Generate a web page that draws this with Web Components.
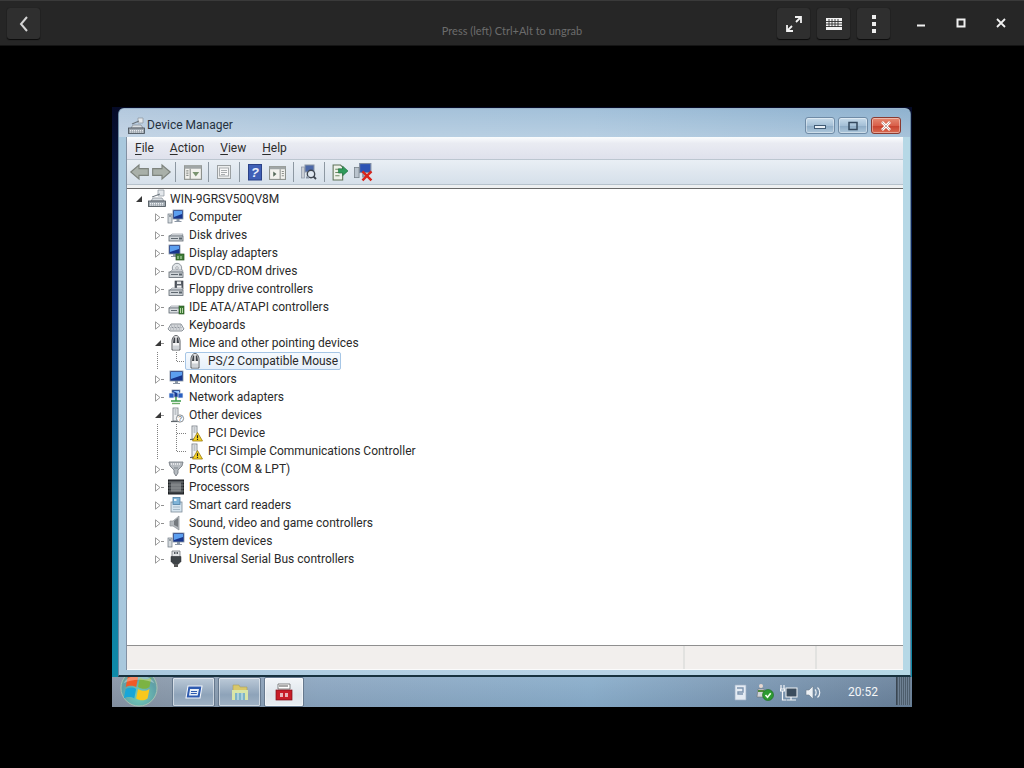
<!DOCTYPE html>
<html lang="en"><head><meta charset="utf-8"><title>Device Manager</title>
<style>html,body{margin:0;background:#000;height:100%;overflow:hidden}body{font-family:Roboto,"Open Sans",sans-serif}</style>
</head><body>
<vm-app></vm-app>
<script>
const mon=(x=4,y=1,w=11,h=9)=>`<path d="M${x+w/2-1.5} ${y+h}h3v2h2v1h-7v-1h2z" fill="#8d98a6"/><rect x="${x}" y="${y}" width="${w}" height="${h}" fill="#17358c" stroke="#8593a3" stroke-width=".8"/><path d="M${x+1} ${y+1}h${w-2}v${h/3}L${x+1} ${y+h-2}z" fill="#5c9ff0"/>`;
const tower=(x=0,y=6,w=4,h=8)=>`<rect x="${x}" y="${y}" width="${w}" height="${h}" fill="#d5dade" stroke="#6c7680" stroke-width=".7"/><path d="M${x+1} ${y+2}h${w-2}" stroke="#58626c"/>`;
const drive=(y=9,h=5)=>`<path d="M2 ${y}l2-2h11l-1 2z" fill="#e8ebee" stroke="#7f8890" stroke-width=".6"/><rect x="1" y="${y}" width="14" height="${h}" fill="#cfd4d8" stroke="#5f6870" stroke-width=".8"/><path d="M3 ${y+2.5}h7" stroke="#5f6870"/><rect x="11" y="${y+1.5}" width="3" height="2" fill="#59636b"/>`;
const mouse=`<path d="M4 15V6c0-3 1.800-5.500 4-5.500s4 2.500 4 5.500v9z" fill="#f5f5f5" stroke="#45494e" stroke-width=".9"/><path d="M5.700 2.500h1.600v5.500H5zM8.700 2.500h1.600l.7 5.500H8.700z" fill="#3c4046"/><path d="M5 10.500h6v4H5z" fill="#cfd3d7"/>`;
const pci=`<rect x="5" y="1" width="5" height="13" fill="#eef0f2" stroke="#747b83" stroke-width=".8"/><path d="M6.5 3h2M6.5 5h2M6.5 7h2" stroke="#8f969e"/><path d="M3 14.5h9" stroke="#60666c" stroke-width="1.2"/>`;
const warn=`<path d="M10.5 7.5l5 8.5H5.5z" fill="#f6d323" stroke="#9a7a10" stroke-width=".8"/><path d="M10.5 10.3v3M10.5 14v1" stroke="#222" stroke-width="1.2"/>`;
const I={
 host:`<path d="M10 0h5v5h-5z" fill="#e4e8ec" stroke="#8b939b" stroke-width=".7"/><path d="M3 10l2-3h8l2 3z" fill="#d9dee2" stroke="#7f8890" stroke-width=".7"/><path d="M4 6l7-3" stroke="#6a737b" stroke-width="1.2"/><rect x=".5" y="10" width="16" height="5.5" fill="#9ea7af" stroke="#444c54" stroke-width=".8"/><path d="M2 12.5h13M2 14h13" stroke="#f0f2f4" stroke-dasharray="1.2 .8" stroke-width=".9"/>`,
 computer:mon(5,1,10,9)+tower(0,5,4,9),
 disk:`<path d="M1 9c2-2 12-2 14 0" fill="#e9ecef" stroke="#8f979e" stroke-width=".7"/>`+drive(9,5),
 display:mon(1,0,11,9)+`<rect x="8" y="9" width="8" height="6" fill="#3e7d38" stroke="#25521f" stroke-width=".7"/><path d="M10 11v3M13 11v3" stroke="#cde8be"/>`,
 dvd:`<circle cx="9" cy="5" r="4.7" fill="#e3e7ea" stroke="#7a828a" stroke-width=".8"/><circle cx="9" cy="5" r="1.3" fill="#fff" stroke="#7a828a" stroke-width=".6"/>`+drive(9,5.5),
 floppy:`<rect x="7" y="0" width="8" height="8" fill="#5a6068" stroke="#33383e" stroke-width=".6"/><rect x="9" y="0.5" width="4" height="2.5" fill="#e8eaec"/><rect x="9" y="4.5" width="4.5" height="3.5" fill="#f4f4f4"/>`+drive(9,5.5),
 ide:`<path d="M1 9l2-2h9l-1 2z" fill="#e8ebee" stroke="#7f8890" stroke-width=".6"/><rect x="1" y="9" width="11" height="5" fill="#d8dcdf" stroke="#5f6870" stroke-width=".8"/><path d="M3 11.5h6" stroke="#5f6870"/><rect x="11" y="7" width="5" height="8" fill="#3b7b33" stroke="#25521f" stroke-width=".6"/><path d="M12.5 9v5M14.5 9v5" stroke="#d5ecc4" stroke-width=".8"/>`,
 keyboard:`<path d="M3 7h10l3 5-2 2H2l-2-2z" fill="#e6e8ea" stroke="#6f777f" stroke-width=".8"/><path d="M3 9h10M2.5 10.5h11M2 12h12" stroke="#8e959c" stroke-dasharray="1 .5"/>`,
 mouse,
 monitor:mon(2,0,13,10),
 network:`<rect x="4" y="1" width="8" height="7" fill="#153a90" stroke="#7d8b9b" stroke-width=".7"/><path d="M5 2h6v3z" fill="#8fc2ff"/><rect x="1" y="4" width="5" height="5" fill="#2a60c0" stroke="#f2f4f6" stroke-width=".7"/><rect x="10" y="4" width="5" height="5" fill="#2a60c0" stroke="#f2f4f6" stroke-width=".7"/><path d="M8 8v4M3 12h10" stroke="#3a9a48" stroke-width="1.4"/><path d="M4 14.5h8" stroke="#6fae6a" stroke-width="1.4"/>`,
 other:pci+`<circle cx="12" cy="11.5" r="3.6" fill="#fff" stroke="#6a7178" stroke-width=".8"/><text x="12" y="14" font-size="6.5" text-anchor="middle" font-family="Liberation Sans" fill="#3b4148">?</text>`,
 warndev:pci+warn,
 ports:`<path d="M1 1h14l-1 4-4 4v3l-2 3-2-3V9L2 5z" fill="#b6bbc0" stroke="#6d747b" stroke-width=".8"/><path d="M3 3h10" stroke="#f3f4f5" stroke-width="1.4" stroke-dasharray="1 1"/><path d="M6 7h4" stroke="#7d848a"/>`,
 cpu:`<rect x="0.5" y="1" width="15" height="14" fill="#3d4145" stroke="#1c1f22"/><rect x="3" y="3.5" width="10" height="9" fill="#75797c"/><path d="M0 3h16M0 6h16M0 9h16M0 12h16" stroke="#a5a8aa" stroke-width=".5"/>`,
 smart:`<rect x="3" y="5" width="11" height="10" fill="#d6e4ee" stroke="#7d8c98" stroke-width=".8"/><rect x="5" y="0.5" width="7" height="7" fill="#7fb4d8" stroke="#4e7ea4" stroke-width=".8"/><rect x="6" y="2" width="2.5" height="2" fill="#e9f2f8"/><path d="M5 10h7M5 12.5h7" stroke="#a5b9c8"/>`,
 sound:`<path d="M2 6h3l6-5v14l-6-4H2z" fill="#b2b7bc" stroke="#8a9096" stroke-width=".7"/><path d="M6 6l4-3v9l-4-2z" fill="#74797e"/>`,
 system:mon(5,0,11,9)+tower(0,5,4,9),
 usb:`<path d="M4 0h8v6H4z" fill="#e2e4e6" stroke="#62686e" stroke-width=".7"/><path d="M6 1h1.5v2H6zM8.5 1H10v2H8.5z" fill="#555b61"/><path d="M3 5.5h10v5l-3 3H6l-3-3z" fill="#3e4347" stroke="#2a2d30" stroke-width=".5"/><path d="M6 13.5h4V16H6z" fill="#555"/>`,
 tbHost:`<path d="M9 -1h6v6H9z" fill="#e4e8ec" stroke="#8b939b" stroke-width=".7"/><path d="M2 10l2-3h9l2 3z" fill="#d9dee2" stroke="#7f8890" stroke-width=".7"/><path d="M3 6l8-3" stroke="#6a737b"/><rect x="-.5" y="10" width="17" height="5.500" fill="#9ea7af" stroke="#444c54" stroke-width=".8"/><path d="M1 12.500h14M1 14h14" stroke="#f0f2f4" stroke-dasharray="1.200 .8"/>`,
 tBack:`<path d="M.7 8L8 1.8V5h8.3v6H8v3.2z" fill="#a9b0a9" stroke="#7d837d"/>`,
 tFwd:`<path d="M15.3 8L8 1.8V5H-.3v6H8v3.2z" fill="#a9b0a9" stroke="#7d837d"/>`,
 tTree:`<rect x=".5" y="2.5" width="15" height="12" fill="#f2f2ee" stroke="#8d918d"/><path d="M.5 2.5h15v2.5H.5z" fill="#a0a6a6"/><path d="M5.5 5v9.5" stroke="#8d918d"/><path d="M7.5 8l3 4 3-4z" fill="#7a9470"/><path d="M2 7h2M2 9h2M2 11h2" stroke="#8d918d"/>`,
 tProps:`<rect x="1.5" y="1.5" width="13" height="13" fill="#eceeee" stroke="#9ba0a2"/><rect x="3.5" y="4" width="9" height="8" fill="#f8f8f8" stroke="#a9adaf"/><path d="M5 6.5h6M5 8.5h6M5 10.5h4" stroke="#a9adaf"/>`,
 tHelp:`<rect x="1.5" y="0.5" width="13" height="15.5" fill="#3f5fb6" stroke="#2b4288"/><text x="8" y="13" font-size="13" font-weight="700" text-anchor="middle" font-family="Liberation Sans" fill="#e8eefc">?</text>`,
 tPane:`<rect x=".5" y="2.5" width="15" height="12" fill="#f2f2ee" stroke="#8d918d"/><path d="M.5 2.5h15v2.5H.5z" fill="#a0a6a6"/><path d="M10.5 5v9.5" stroke="#8d918d"/><path d="M4 7l3 2.5L4 12z" fill="#55695a"/><path d="M12 7h2M12 9h2M12 11h2" stroke="#8d918d"/>`,
 tScan:`<rect x="4" y="1" width="9" height="7" fill="#4b68a8" stroke="#8a95a6"/><rect x="0.5" y="3" width="3" height="11" fill="#c9ced4" stroke="#8a95a6" stroke-width=".7"/><circle cx="10" cy="10" r="3.700" fill="#dfe8f2" stroke="#3e4650" stroke-width="1.400"/><path d="M5 13.500h3" stroke="#8a95a6" stroke-width="2"/><path d="M12.500 12.500l2.500 2.500" stroke="#3e4650" stroke-width="1.800"/>`,
 tUpdate:`<path d="M2 1h7l2 2v12H2z" fill="#eef1e9" stroke="#5f7358"/><path d="M4 5h4M4 8h3M4 11h4" stroke="#6d8a63"/><path d="M16 6.5L11 2v2.5H7v4h4V11z" fill="#2f9a5a" stroke="#1f6c3e" stroke-width=".6"/>`,
 tRemove:`<rect x="5" y="0.5" width="10" height="8" fill="#2c52b4" stroke="#7f8da3"/><rect x="0.5" y="4" width="4" height="9" fill="#b9c3cd" stroke="#76808a" stroke-width=".7"/><path d="M8 9v3h4" stroke="#8a95a6" stroke-width="1.6" fill="none"/><path d="M7.5 7.5l8 8M15.5 7.5l-8 8" stroke="#d8251c" stroke-width="2.2"/>`
};
const svg=(n,s=16,vb=16)=>`<svg width="${s}" height="${s}" viewBox="0 0 ${vb} ${vb}" style="display:block;overflow:visible" aria-hidden="true">${I[n]}</svg>`;

function el(name,css,html){
  customElements.define(name,class extends HTMLElement{
    connectedCallback(){
      if(this.shadowRoot)return;
      const r=this.attachShadow({mode:'open'});
      r.innerHTML=`<style>${css}</style>`+(typeof html==='function'?html(this):html);
    }
  });
}

el('vm-header',`
:host{display:flex;align-items:flex-start;height:46px;box-sizing:border-box;background:#262626;border-top:1px solid #3a3a3a;border-bottom:1px solid #141414;padding:7px 0 0 7px;color:#fff}
.b{width:33px;height:31px;background:#2f2f2f;border-radius:3px;box-shadow:0 1px 1px #0c0c0c,0 0 1px #161616;display:flex;align-items:center;justify-content:center;flex:none}
.msg{flex:1;text-align:center;font:11px/1 Lato,"Open Sans",sans-serif;color:#6c6c6c;padding:17px 0 0 207px;white-space:nowrap}
.r{display:flex;gap:7px;margin-right:11px}
.wc{display:flex;width:120px;flex:none;margin-right:3px}
.wc span{width:40px;height:30px;display:flex;align-items:center;justify-content:center}
`,`
<span class="b"><svg width="12" height="16" viewBox="0 0 12 16"><path d="M9 1L3 8l6 7" fill="none" stroke="#d4d4d4" stroke-width="2"/></svg></span>
<span class="msg">Press (left) Ctrl+Alt to ungrab</span>
<span class="r">
<span class="b"><svg width="16" height="16" viewBox="0 0 16 16"><path d="M9 1h6v6M15 1l-5 5M7 15H1V9M1 15l5-5" fill="none" stroke="#f2f2f2" stroke-width="1.8"/></svg></span>
<span class="b"><svg width="16" height="12" viewBox="0 0 16 12"><rect width="16" height="12" fill="#f2f2f2"/><path d="M0 3.5h16M0 6h16M0 8.500h16M3 1v8M6 1v8M9 1v8M12 1v8" stroke="#2f2f2f" stroke-width=".9"/></svg></span>
<span class="b"><svg width="4" height="18" viewBox="0 0 4 18"><path d="M0 0h4v4H0zM0 7h4v4H0zM0 14h4v4H0z" fill="#eee"/></svg></span>
</span>
<span class="wc">
<span><svg width="10" height="10" viewBox="0 0 10 10"><path d="M1 7.500h8" stroke="#f0f0f0" stroke-width="2"/></svg></span>
<span><svg width="10" height="10" viewBox="0 0 10 10"><rect x="1.500" y="1.500" width="7" height="7" fill="none" stroke="#f0f0f0" stroke-width="2"/></svg></span>
<span><svg width="10" height="10" viewBox="0 0 10 10"><path d="M1 1l8 8M9 1l-8 8" stroke="#f0f0f0" stroke-width="1.800"/></svg></span>
</span>`);

el('win-title',`
:host{display:flex;align-items:flex-start;height:28px;box-sizing:border-box;flex:none;padding:8px 9px 0 9px;color:#26323e;font-size:12px;line-height:17px;background:linear-gradient(180deg,rgba(255,255,255,0) 0,rgba(255,255,255,.22) 100%),linear-gradient(90deg,#b4c9de 0,#a8c3da 25%,#a3c1da 60%,#8fb2cf 100%)}
.ic{margin-right:3px;margin-top:1px}
.t{flex:1;letter-spacing:0}
.btns{display:flex;gap:3px}
.c{width:30px;height:17px;box-sizing:border-box;border:1px solid #6f8ba6;border-radius:3px;background:linear-gradient(180deg,#c8dceb 0,#a5c0d7 50%,#8fadc7 55%,#aec8dc 100%);box-shadow:inset 0 0 0 1px rgba(255,255,255,.4);display:flex;align-items:center;justify-content:center}
.x{border-color:#8a3a30;background:linear-gradient(180deg,#e58a72 0,#d9604a 50%,#c8432f 55%,#d96a50 100%)}
`,`<span class="ic">${svg('host',16)}</span><span class="t">Device Manager</span>
<span class="btns"><span class="c"><svg width="14" height="8" viewBox="0 0 14 8"><rect x="1.500" y="3.500" width="11" height="3" fill="#e9f0f6" stroke="#405a74"/></svg></span>
<span class="c"><svg width="12" height="10" viewBox="0 0 12 10"><rect x="2" y="1.500" width="8" height="7" fill="none" stroke="#33485e" stroke-width="1.500"/></svg></span>
<span class="c x"><svg width="12" height="10" viewBox="0 0 12 10"><path d="M2 1l8 8M10 1L2 9" stroke="#fff" stroke-width="2.600"/><path d="M2 1l8 8M10 1L2 9" stroke="#6d2a20" stroke-width=".4"/></svg></span></span>`);

el('win-menu',`
:host{display:flex;align-items:center;height:23px;flex:none;box-sizing:border-box;background:linear-gradient(180deg,#fafcfd 0,#e9ebf2 30%,#dfe1ec 100%);border-bottom:1px solid #bcc6d0;font-size:12px;color:#2b2b2b}
span{padding:0 8px}
u{text-decoration-thickness:1px;text-underline-offset:2px}
`,`<span><u>F</u>ile</span><span><u>A</u>ction</span><span><u>V</u>iew</span><span><u>H</u>elp</span>`);

el('win-toolbar',`
:host{display:flex;align-items:center;height:25px;flex:none;box-sizing:border-box;background:linear-gradient(180deg,#e9eff5 0,#dfe7ef 50%,#d6e0ea 100%);border-bottom:1px solid #b6c2cc}
i{width:23px;height:22px;display:flex;align-items:center;justify-content:center}
b{width:8px;height:20px;display:block;background:linear-gradient(#8d98a2,#8d98a2) 4px 0/1px 100% no-repeat}
`,`<i>${svg('tBack',18,16)}</i><i>${svg('tFwd',18,16)}</i><b style="background-position:2px 0"></b><i>${svg('tTree',18,16)}</i><b></b><i>${svg('tProps',16)}</i><b></b><i>${svg('tHelp',16)}</i><i>${svg('tPane',17,16)}</i><b></b><i>${svg('tScan',16)}</i><b></b><i>${svg('tUpdate',17,16)}</i><i>${svg('tRemove',18,16)}</i>`);

el('tree-row',`
:host{display:flex;height:18px;align-items:center;padding-left:3px;font-size:12px;color:#2a2a2a;white-space:nowrap}
.g{flex:none;width:56px;height:18px;background:linear-gradient(#808080 50%,transparent 50%) 27px 0/1px 2px repeat-y}
.g svg{display:block}
.e{flex:none;width:18px;height:18px;display:flex;align-items:center;justify-content:center;background:linear-gradient(90deg,#909090 50%,transparent 50%) 12px 9px/6px 1px no-repeat}
.e.l1{margin-left:19px}
.e.root{background:none}
.sel{display:flex;align-items:center;height:18px;box-sizing:border-box;border:1px solid #a6c6e6;border-radius:2px;background:linear-gradient(180deg,#f6fafe,#e6f0fb);padding-right:2px;margin-left:-1px}
.ic{flex:none;margin:0 5px 0 1px}
`,h=>{
 const lv=+h.getAttribute('level')||0,st=h.getAttribute('state')||'',ic=h.getAttribute('icon'),txt=h.getAttribute('text');
 const last=h.hasAttribute('last');
 const exp=st==='open'?`<svg width="8" height="8" viewBox="0 0 8 8"><path d="M7 1v6H1z" fill="#383838"/></svg>`:st==='closed'?`<svg width="6" height="9" viewBox="0 0 6 9"><path d="M.5 .8l4.500 3.700L.5 8.200z" fill="#fff" stroke="#9a9a9a"/></svg>`:'';
 const pre=lv===2?`<span class="g"><svg width="56" height="18" viewBox="0 0 56 18"><path d="M46.500 0V${last?9:18}M47 9.500H56" stroke="#808080" stroke-dasharray="1 1" fill="none"/></svg></span>`:'';
 const inner=`<span class="ic">${svg(ic,16)}</span><span>${txt}</span>`;
 const e=lv===2?'':`<span class="e ${lv===0?'root':'l1'}">${exp}</span>`;
 return pre+e+(h.hasAttribute('selected')?`<span class="sel">${inner}</span>`:inner);
});

const rows=[
 ['0','open','tbHost','WIN-9GRSV50QV8M'],
 ['1','closed','computer','Computer'],['1','closed','disk','Disk drives'],['1','closed','display','Display adapters'],['1','closed','dvd','DVD/CD-ROM drives'],['1','closed','floppy','Floppy drive controllers'],['1','closed','ide','IDE ATA/ATAPI controllers'],['1','closed','keyboard','Keyboards'],
 ['1','open','mouse','Mice and other pointing devices'],
 ['2','','mouse','PS/2 Compatible Mouse','selected last'],
 ['1','closed','monitor','Monitors'],['1','closed','network','Network adapters'],
 ['1','open','other','Other devices'],
 ['2','','warndev','PCI Device',''],['2','','warndev','PCI Simple Communications Controller','last'],
 ['1','closed','ports','Ports (COM &amp; LPT)'],['1','closed','cpu','Processors'],['1','closed','smart','Smart card readers'],['1','closed','sound','Sound, video and game controllers'],['1','closed','system','System devices'],['1','closed','usb','Universal Serial Bus controllers']
];
el('dm-tree',`:host{display:block;flex:1;min-height:0;background:#fff;border-top:1px solid #6a6a6a;border-bottom:1px solid #8f8f8f;padding-top:1px;overflow:hidden}`,
 rows.map(r=>`<tree-row level="${r[0]}" state="${r[1]}" icon="${r[2]}" text="${r[3]}" ${r[4]||''}></tree-row>`).join(''));

el('win-status',`
:host{display:flex;height:23px;flex:none;background:#f2efed;border-bottom:1px solid #fbfbfb}
s{display:block;border-right:2px solid #e2e2e0}
`,`<s style="width:556px"></s><s style="width:130px"></s>`);

el('win-window',`
:host{display:flex;flex-direction:column;position:absolute;left:6px;top:1px;width:793px;height:569px;box-sizing:border-box;border:1px solid #6c8aa3;border-bottom:2px solid #18323f;border-top-color:#9ab4ca;border-radius:6px 6px 0 0;background:linear-gradient(90deg,#a9c8dd,#b9d3e6 60%,#b6d8e6);overflow:hidden}
.c{flex:1;min-height:0;display:flex;flex-direction:column;margin:0 7px 5px 7px;border-left:1px solid #8391a3}
.gap{height:3px;flex:none;background:#eef0f1}
`,`<win-title></win-title><div class="c"><win-menu></win-menu><win-toolbar></win-toolbar><div class="gap"></div><dm-tree></dm-tree><win-status></win-status></div>`);

el('win-taskbar',`
:host{display:flex;height:30px;flex:none;align-items:flex-start;background:linear-gradient(180deg,rgba(255,255,255,.08),rgba(0,0,0,.04)),linear-gradient(90deg,#8794a5 0,#8898aa 7%,#8aa5c0 26%,#88acca 60%,#7a97b3 80%,#68809a 100%);color:#fff;font-size:12px}
.orb{flex:none;width:60px;height:30px;display:flex;padding-left:8px;box-sizing:border-box}
.orb svg{margin-top:-8px;display:block;overflow:visible}
.tb{flex:none;height:30px;box-sizing:border-box;width:43px;margin-right:3px;border:1px solid #66798e;border-radius:2px;background:linear-gradient(180deg,#bccad8,#8ea3b9 60%,#a0b2c4);box-shadow:inset 0 0 0 1px rgba(255,255,255,.5);display:flex;align-items:center;justify-content:center}
.tb.act{width:40px;background:linear-gradient(180deg,#f2f5f8,#dfe6ec 60%,#e8edf1)}
.sp{flex:1}
.tr{width:24px;flex:none;height:30px;display:flex;align-items:center;justify-content:center}
.time{width:60px;flex:none;text-align:center;line-height:30px;margin:0 3px 0 8px;color:#f4f6f8}
.show{width:14px;height:28px;margin-right:1px;flex:none;background:repeating-linear-gradient(90deg,#4d5d6c 0,#4d5d6c 1px,#6e8093 1px,#6e8093 2px);border-left:1px solid #3a4652}
`,`<span class="orb"><svg width="38" height="38" viewBox="0 0 40 40"><defs><radialGradient id="g" cx=".5" cy=".7" r=".7"><stop offset="0" stop-color="#74d0b8"/><stop offset=".7" stop-color="#5fa0a8"/><stop offset="1" stop-color="#7aa49a"/></radialGradient></defs><circle cx="20" cy="20" r="19" fill="url(#g)" stroke="#a9c4b0"/>
<path d="M8 9c4-3 8-2 11 0l-2 10c-3-2-8-2-11 0z" fill="#f05a28"/><path d="M21 9c3 2 7 3 12 0l-2 10c-4 3-9 2-12 0z" fill="#7cb342"/><path d="M6 21c4-2 8-2 11 0l-2 10c-3-2-8-2-11 0z" fill="#18a6d8"/><path d="M19 21c3 2 8 3 12 0l-2 10c-4 3-9 2-12 0z" fill="#f8c81c"/>
<path d="M4 15C8 4 32 4 36 15 28 10 12 10 4 15z" fill="#fff" opacity=".32"/></svg></span>
<span class="tb"><svg width="18" height="14" viewBox="0 0 18 14"><path d="M3 1h14l-2 12H1z" fill="#2e5bb0" stroke="#f2f6fb" stroke-width="1.100"/><path d="M5 4h9l-1.300 6.500H4z" fill="#e8eff7"/><path d="M6 6.500h6M5.800 8.500h6" stroke="#2e5bb0"/></svg></span>
<span class="tb"><svg width="20" height="18" viewBox="0 0 20 18"><path d="M3 2h6l1 2h7v4H3z" fill="#d9c86a" stroke="#a8a060" stroke-width=".6"/><path d="M2 7h16v10H2z" fill="#d9e6a8"/><path d="M5 10h10v7H5z" fill="#7db4c8"/><path d="M8 10v7M12 10v7" stroke="#d9ecf2"/></svg></span>
<span class="tb act"><svg width="18" height="18" viewBox="0 0 18 18"><path d="M3 1h12v5H3z" fill="#fff" stroke="#555" stroke-width=".7"/><path d="M4 3h9" stroke="#555"/><rect x="1" y="7" width="16" height="10" fill="#c81e28" stroke="#7c1018" stroke-width=".7"/><path d="M5 10h3v4H5zM10 10h3v4h-3z" fill="#f6f6f6" opacity=".7"/></svg></span>
<span class="sp"></span>
<span class="tr" style="margin-right:1px"><svg width="15" height="17" viewBox="0 0 15 17"><path d="M2 1h11v15H2z" fill="#e4ebf3" stroke="#9fb0c4" stroke-width=".7"/><path d="M4 4h6v4H5v2h5" fill="none" stroke="#7d95b0" stroke-width="1.400"/></svg></span>
<span class="tr"><svg width="18" height="18" viewBox="0 0 18 18"><circle cx="5" cy="3" r="2" fill="#e9d8d0"/><path d="M2 6h6l1 8H1z" fill="#d0d4d8" stroke="#666" stroke-width=".5"/><path d="M2 8h6" stroke="#4f8a38" stroke-width="2"/><circle cx="12" cy="12" r="5.500" fill="#2d9a32" stroke="#1c6a20" stroke-width=".6"/><path d="M9.500 12l2 2.200 3.200-4" fill="none" stroke="#f4fff0" stroke-width="1.600"/></svg></span>
<span class="tr"><svg width="18" height="17" viewBox="0 0 18 17"><rect x="6" y="4" width="11" height="9" fill="#3b4d5e" stroke="#f2f5f8"/><path d="M11 13v3M7 16h9" stroke="#f2f5f8" stroke-width="1.200"/><path d="M1 1v4M4 1v4M.5 5h4v2h-4zM2.500 7v9h4" fill="none" stroke="#f4f6f8" stroke-width="1.200"/></svg></span>
<span class="tr"><svg width="17" height="15" viewBox="0 0 17 15"><path d="M1 5h3l4-4v13l-4-4H1z" fill="#edf1f5" stroke="#6b7d8f" stroke-width=".6"/><path d="M10 4.500c1.500 1.500 1.500 4.500 0 6M12.500 2.500c3 2.500 3 7.500 0 10" fill="none" stroke="#edf1f5" stroke-width="1.200"/></svg></span>
<span class="time">20:52</span><span class="show"></span>`);

el('vm-screen',`
:host{display:flex;flex-direction:column;width:800px;height:600px;margin:61px auto 0;font-family:Roboto,"Open Sans",sans-serif}
.desk{flex:1;position:relative;background:linear-gradient(180deg,#050a26 0,#0c2f72 35%,#0f6f9c 70%,#0e8aa8 100%)}
`,`<div class="desk"><win-window></win-window></div><win-taskbar></win-taskbar>`);

el('vm-app',`:host{display:block;width:1024px;height:768px;background:#000;overflow:hidden}`,`<vm-header></vm-header><vm-screen></vm-screen>`);
</script>
</body></html>
